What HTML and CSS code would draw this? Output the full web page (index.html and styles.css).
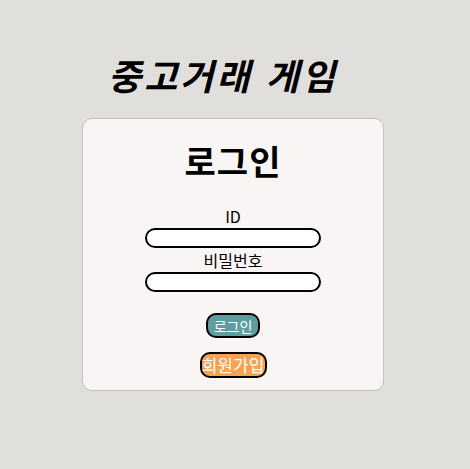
FILE: index.html
```html
<!DOCTYPE html>
<html lang="ko">
<head>
<meta charset="utf-8">
<link rel="stylesheet" href="styles.css">
</head>
<body>
<main class="page">
  <h1 class="title">중고거래 게임</h1>
  <section class="card">
    <h2 class="card-title">로그인</h2>
    <form class="form">
      <label class="label" for="id">ID</label>
      <input class="field" id="id" type="text">
      <label class="label" for="pw">비밀번호</label>
      <input class="field" id="pw" type="password">
      <button class="btn btn-login" type="button">로그인</button>
      <button class="btn btn-join" type="button">회원가입</button>
    </form>
  </section>
</main>
</body>
</html>
```

FILE: styles.css
```css
html, body {
  margin: 0;
  padding: 0;
}
body {
  background: #e0dfdc;
  font-family: "Noto Sans CJK KR", "Noto Sans", sans-serif;
  color: #000;
}
.page {
  display: flex;
  flex-direction: column;
  align-items: center;
  padding-top: 50px;
}
.title {
  margin: 0 24px 0 0;
  font-size: 36px;
  font-style: italic;
  font-weight: 700;
  line-height: 48px;
  letter-spacing: 3px;
}
.card {
  margin-top: 20px;
  margin-right: 4px;
  width: 300px;
  height: 271px;
  background: #f9f5f4;
  border: 1px solid #c2c2c2;
  border-radius: 10px;
  box-sizing: content-box;
  display: flex;
  flex-direction: column;
  align-items: center;
}
.card-title {
  margin: 19px 0 0;
  font-size: 34px;
  font-weight: 700;
  line-height: 46px;
  letter-spacing: 1px;
}
.form {
  margin-top: 20px;
  display: flex;
  flex-direction: column;
  align-items: center;
}
.label {
  font-size: 16px;
  line-height: 24px;
}
.field {
  width: 176px;
  height: 20px;
  box-sizing: border-box;
  border: 2px solid #000;
  border-radius: 10px;
  background: #fff;
  margin: 0;
  padding: 0 8px;
}
.btn {
  font-family: inherit;
  color: #fff;
  border: 2px solid #000;
  border-radius: 10px;
  cursor: pointer;
  box-sizing: border-box;
}
.btn-login {
  margin-top: 21px;
  background: #5f9ea0;
  font-size: 14px;
  width: 54px;
  height: 25px;
  line-height: 18px;
  padding: 0;
}
.btn-join {
  margin-top: 14px;
  background: #f6a252;
  font-size: 17px;
  width: 67px;
  height: 26px;
  line-height: 20px;
  padding: 0;
}
```
